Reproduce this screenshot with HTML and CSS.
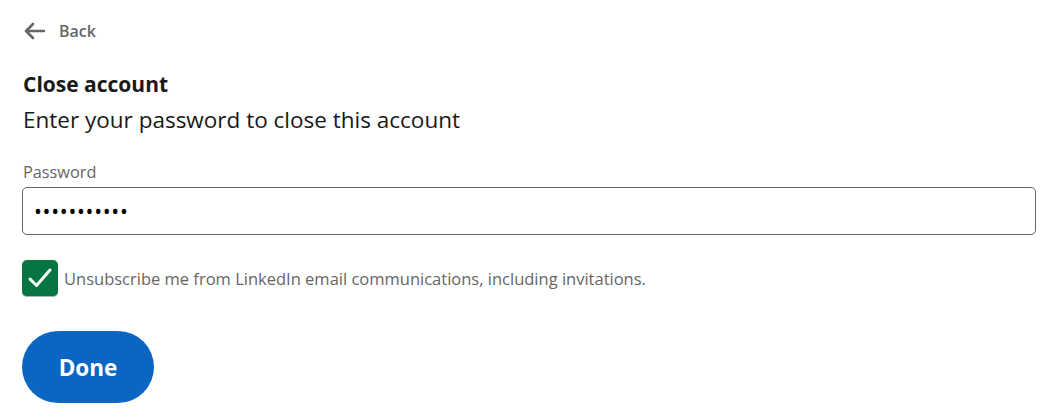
FILE: index.html
```html
<!DOCTYPE html>
<html>
<head>
<meta charset="utf-8">
<link rel="stylesheet" href="styles.css">
</head>
<body>
<div class="page">
  <a class="back" href="#">
    <svg class="back-icon" width="22" height="18" viewBox="0 0 22 18" aria-hidden="true">
      <path d="M21 9H3M10 2L3 9l7 7" fill="none" stroke="#666" stroke-width="2.6" stroke-linecap="round" stroke-linejoin="round"/>
    </svg>
    <span>Back</span>
  </a>
  <h1 class="title">Close account</h1>
  <p class="subtitle">Enter your password to close this account</p>
  <label class="label" for="pw">Password</label>
  <div class="input">•••••••••••</div>
  <div class="check-row">
    <span class="checkbox">
      <svg width="26" height="24" viewBox="0 0 26 24" aria-hidden="true">
        <path d="M3 13l6.5 6.5L23 4" fill="none" stroke="#fff" stroke-width="3" stroke-linecap="round" stroke-linejoin="round"/>
      </svg>
    </span>
    <span class="check-text">Unsubscribe me from LinkedIn email communications, including invitations.</span>
  </div>
  <button class="done">Done</button>
</div>
</body>
</html>
```
FILE: styles.css
```css
html, body {
  margin: 0;
  padding: 0;
  background: #fff;
}
body {
  font-family: "Open Sans", "Noto Sans", sans-serif;
}
.page {
  padding: 18px 21px 0 22px;
  display: flex;
  flex-direction: column;
  align-items: flex-start;
}
.back {
  display: flex;
  align-items: center;
  gap: 14px;
  text-decoration: none;
  color: #666;
  font-size: 16px;
  font-weight: 600;
  height: 26px;
  padding-left: 1px;
}
.title {
  margin: 26px 0 0 0;
  font-size: 21px;
  font-weight: 700;
  color: #191919;
  line-height: 28px;
  padding-left: 1px;
}
.subtitle {
  margin: 7px 0 0 0;
  font-size: 22.5px;
  color: #191919;
  line-height: 30px;
  padding-left: 1px;
}
.label {
  margin-top: 26px;
  font-size: 16.3px;
  color: #666;
  line-height: 22px;
  padding-left: 1px;
}
.input {
  margin-top: 4px;
  align-self: stretch;
  box-sizing: border-box;
  height: 48px;
  border: 1.5px solid #666;
  border-radius: 5px;
  padding: 0 11px;
  display: flex;
  align-items: center;
  font-size: 21px;
  letter-spacing: 0.7px;
  color: #000;
}
.check-row {
  margin-top: 25px;
  display: flex;
  align-items: center;
  gap: 6px;
}
.checkbox {
  width: 36px;
  height: 37px;
  box-sizing: border-box;
  background: #057642;
  border-radius: 5px;
  border-bottom: 1px solid #9bb;
  display: flex;
  align-items: center;
  justify-content: center;
}
.check-text {
  font-size: 16.5px;
  color: #666;
}
.done {
  margin-top: 34px;
  width: 132px;
  height: 72px;
  border: none;
  border-radius: 36px;
  background: #0a66c2;
  color: #fff;
  font-family: inherit;
  font-size: 22.5px;
  font-weight: 700;
  cursor: pointer;
}
```
